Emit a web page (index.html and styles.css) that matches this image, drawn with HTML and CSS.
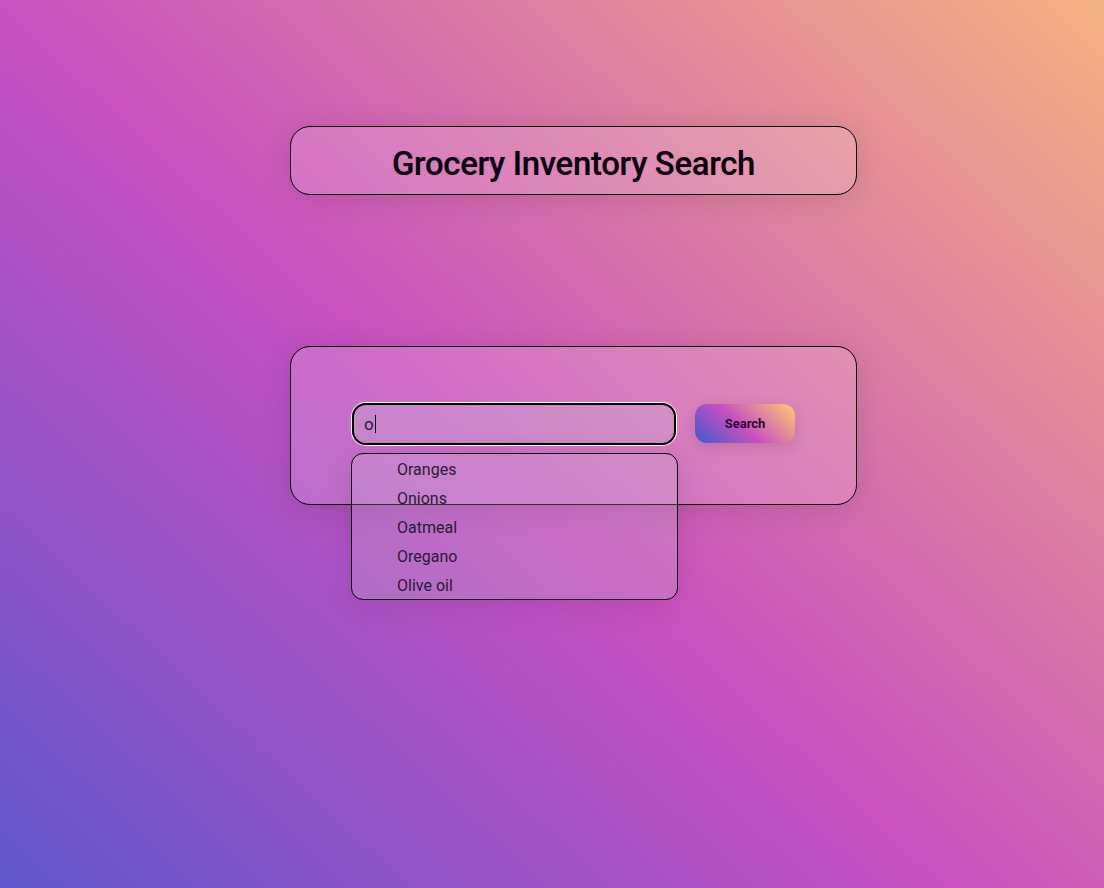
FILE: index.html
```html
<!DOCTYPE html>
<html lang="en">
<head>
<meta charset="utf-8">
<title>Grocery Inventory Search</title>
<link rel="stylesheet" href="styles.css">
</head>
<body>
<main class="page">
  <header class="card title-card">
    <h1 class="title">Grocery Inventory Search</h1>
  </header>
  <section class="card search-card">
    <div class="search-row">
      <div class="field">
        <div class="input">o<span class="caret"></span></div>
        <ul class="suggestions">
          <li>Oranges</li>
          <li>Onions</li>
          <li>Oatmeal</li>
          <li>Oregano</li>
          <li>Olive oil</li>
        </ul>
      </div>
      <button class="search-btn" type="button">Search</button>
    </div>
  </section>
</main>
</body>
</html>
```

FILE: styles.css
```css
html, body {
  margin: 0;
  padding: 0;
}
body {
  min-height: 100vh;
  background: linear-gradient(43deg, #4158D0 -14%, #C850C0 46%, #FFCC70 114%);
  font-family: Roboto, "Noto Sans", sans-serif;
  overflow: hidden;
}
.page {
  width: 567px;
  margin-left: 290px;
  padding-top: 126px;
  display: flex;
  flex-direction: column;
  gap: 151px;
}
.card {
  box-sizing: border-box;
  border: 1px solid #000;
  border-radius: 20px;
  background: rgba(255, 255, 255, 0.16);
  box-shadow: 0 4px 30px rgba(0, 0, 0, 0.12);
}
.title-card {
  height: 69px;
  display: flex;
  align-items: center;
  justify-content: center;
}
.title {
  margin: 0;
  padding-top: 5px;
  font-size: 33px;
  font-weight: 500;
  letter-spacing: -0.35px;
  color: #0b0010;
  text-shadow: 0 0 1px rgba(0,0,0,0.3);
}
.search-card {
  height: 159px;
  display: flex;
  align-items: center;
  justify-content: center;
}
.search-row {
  display: flex;
  align-items: center;
  gap: 19px;
  margin-top: -4px;
}
.field {
  position: relative;
}
.input {
  box-sizing: border-box;
  width: 324px;
  height: 42px;
  border: 2px solid #000;
  border-radius: 14px;
  box-shadow: 0 0 0 1px #fff;
  background: rgba(200, 190, 210, 0.3);
  padding-left: 10px;
  display: flex;
  align-items: center;
  font-size: 17px;
  color: #1b1a4a;
}
.caret {
  display: inline-block;
  width: 1px;
  height: 18px;
  background: #000;
  margin-left: 1px;
}
.suggestions {
  position: absolute;
  left: -1px;
  top: 50px;
  box-sizing: border-box;
  width: 327px;
  margin: 0;
  padding: 1px 0 0 45px;
  list-style: none;
  border: 1px solid #000;
  border-radius: 12px;
  background: rgba(200, 190, 210, 0.25);
  box-shadow: 0 4px 30px rgba(0, 0, 0, 0.1);
  height: 147px;
}
.suggestions li {
  height: 29px;
  line-height: 30px;
  font-size: 16px;
  color: #2a1a36;
}
.search-btn {
  box-sizing: border-box;
  width: 100px;
  height: 39px;
  border: none;
  border-radius: 12px;
  background: linear-gradient(43deg, #4158D0 0%, #C850C0 46%, #FFCC70 100%);
  box-shadow: 0 4px 14px rgba(0, 0, 0, 0.12);
  font-family: Roboto, "Noto Sans", sans-serif;
  font-size: 13px;
  font-weight: 700;
  color: #2a0a36;
  padding: 0;
}
```
